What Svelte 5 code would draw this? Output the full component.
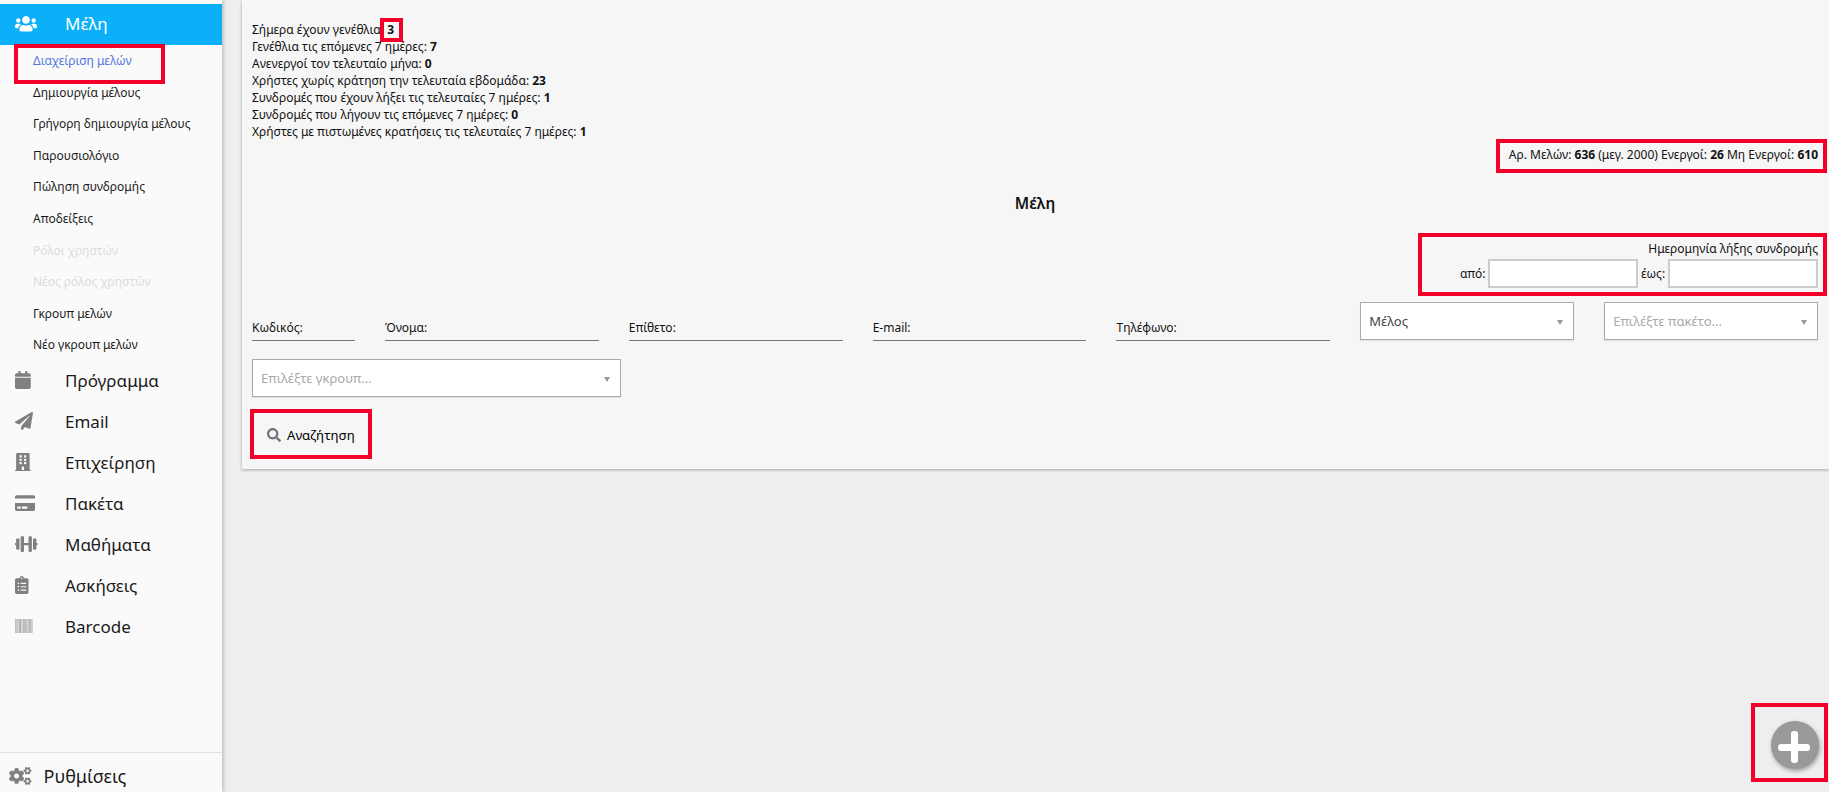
<script>
  const icons = {
    calendar: { vb: '0 0 448 512', w: 15.75, d: 'M12 192h424c6.6 0 12 5.4 12 12v260c0 26.5-21.5 48-48 48H48c-26.5 0-48-21.5-48-48V204c0-6.6 5.4-12 12-12zm436-44v-36c0-26.5-21.5-48-48-48h-48V12c0-6.6-5.4-12-12-12h-40c-6.6 0-12 5.4-12 12v52H160V12c0-6.6-5.4-12-12-12h-40c-6.6 0-12 5.4-12 12v52H48C21.5 64 0 85.5 0 112v36c0 6.6 5.4 12 12 12h424c6.6 0 12-5.4 12-12z' },
    plane: { vb: '0 0 512 512', w: 18, d: 'M476 3.2L12.5 270.6c-18.1 10.4-15.8 35.6 2.2 43.2L121 358.4l287.3-253.2c5.5-4.9 13.3 2.6 8.6 8.3L176 407v80.5c0 23.6 28.5 32.9 42.5 15.8L282 426l124.6 52.2c14.2 6 30.4-2.9 33-18.2l72-432C515 7.8 493.3-6.8 476 3.2z' },
    building: { vb: '0 0 448 512', w: 15.75, d: 'M436 480h-20V24c0-13.255-10.745-24-24-24H56C42.745 0 32 10.745 32 24v456H12c-6.627 0-12 5.373-12 12v20h448v-20c0-6.627-5.373-12-12-12zM128 76c0-6.627 5.373-12 12-12h40c6.627 0 12 5.373 12 12v40c0 6.627-5.373 12-12 12h-40c-6.627 0-12-5.373-12-12V76zm0 96c0-6.627 5.373-12 12-12h40c6.627 0 12 5.373 12 12v40c0 6.627-5.373 12-12 12h-40c-6.627 0-12-5.373-12-12v-40zm52 148h-40c-6.627 0-12-5.373-12-12v-40c0-6.627 5.373-12 12-12h40c6.627 0 12 5.373 12 12v40c0 6.627-5.373 12-12 12zm76 160h-64v-84c0-6.627 5.373-12 12-12h40c6.627 0 12 5.373 12 12v84zm64-172c0 6.627-5.373 12-12 12h-40c-6.627 0-12-5.373-12-12v-40c0-6.627 5.373-12 12-12h40c6.627 0 12 5.373 12 12v40zm0-96c0 6.627-5.373 12-12 12h-40c-6.627 0-12-5.373-12-12v-40c0-6.627 5.373-12 12-12h40c6.627 0 12 5.373 12 12v40zm0-96c0 6.627-5.373 12-12 12h-40c-6.627 0-12-5.373-12-12V76c0-6.627 5.373-12 12-12h40c6.627 0 12 5.373 12 12v40z' },
    card: { vb: '0 0 576 512', w: 20.25, d: 'M0 432c0 26.5 21.5 48 48 48h480c26.5 0 48-21.5 48-48V256H0v176zm192-68c0-6.6 5.4-12 12-12h136c6.6 0 12 5.4 12 12v40c0 6.6-5.4 12-12 12H204c-6.6 0-12-5.4-12-12v-40zm-128 0c0-6.6 5.4-12 12-12h72c6.6 0 12 5.4 12 12v40c0 6.6-5.4 12-12 12H76c-6.6 0-12-5.4-12-12v-40zM576 80v48H0V80c0-26.5 21.5-48 48-48h480c26.5 0 48 21.5 48 48z' },
    dumbbell: { vb: '0 0 640 512', w: 22.5, d: 'M104 96H56c-13.3 0-24 10.7-24 24v104H8c-4.4 0-8 3.6-8 8v48c0 4.4 3.6 8 8 8h24v104c0 13.3 10.7 24 24 24h48c13.3 0 24-10.7 24-24V120c0-13.3-10.7-24-24-24zm528 128h-24V120c0-13.3-10.7-24-24-24h-48c-13.3 0-24 10.7-24 24v272c0 13.3 10.7 24 24 24h48c13.3 0 24-10.7 24-24V288h24c4.4 0 8-3.6 8-8v-48c0-4.4-3.6-8-8-8zM456 32h-48c-13.3 0-24 10.7-24 24v168H256V56c0-13.3-10.7-24-24-24h-48c-13.3 0-24 10.7-24 24v400c0 13.3 10.7 24 24 24h48c13.3 0 24-10.7 24-24V288h128v168c0 13.3 10.7 24 24 24h48c13.3 0 24-10.7 24-24V56c0-13.3-10.7-24-24-24z' },
    clipboard: { vb: '0 0 384 512', w: 13.5, d: 'M336 64h-80c0-35.3-28.7-64-64-64s-64 28.7-64 64H48C21.5 64 0 85.5 0 112v352c0 26.5 21.5 48 48 48h288c26.5 0 48-21.5 48-48V112c0-26.5-21.5-48-48-48zM96 424c-13.3 0-24-10.7-24-24s10.7-24 24-24 24 10.7 24 24-10.7 24-24 24zm0-96c-13.3 0-24-10.7-24-24s10.7-24 24-24 24 10.7 24 24-10.7 24-24 24zm0-96c-13.3 0-24-10.7-24-24s10.7-24 24-24 24 10.7 24 24-10.7 24-24 24zm96-192c13.3 0 24 10.7 24 24s-10.7 24-24 24-24-10.7-24-24 10.7-24 24-24zm128 368c0 4.4-3.6 8-8 8H168c-4.4 0-8-3.6-8-8v-16c0-4.4 3.6-8 8-8h144c4.4 0 8 3.6 8 8v16zm0-96c0 4.4-3.6 8-8 8H168c-4.4 0-8-3.6-8-8v-16c0-4.4 3.6-8 8-8h144c4.4 0 8 3.6 8 8v16zm0-96c0 4.4-3.6 8-8 8H168c-4.4 0-8-3.6-8-8v-16c0-4.4 3.6-8 8-8h144c4.4 0 8 3.6 8 8v16z' }
  };
  const usersPath = 'M96 224c35.3 0 64-28.7 64-64s-28.7-64-64-64-64 28.7-64 64 28.7 64 64 64zm448 0c35.3 0 64-28.7 64-64s-28.7-64-64-64-64 28.7-64 64 28.7 64 64 64zm32 32h-64c-17.6 0-33.5 7.1-45.1 18.6 40.3 22.1 68.9 62 75.1 109.4h66c17.7 0 32-14.3 32-32v-32c0-35.3-28.7-64-64-64zm-256 0c61.9 0 112-50.1 112-112S381.9 32 320 32 208 82.1 208 144s50.1 112 112 112zm76.8 32h-8.3c-20.8 10-43.9 16-68.5 16s-47.6-6-68.5-16h-8.3C179.6 288 128 339.6 128 403.2V432c0 26.5 21.5 48 48 48h288c26.5 0 48-21.5 48-48v-28.8c0-63.6-51.6-115.2-115.2-115.2zm-223.7-13.4C161.5 263.1 145.6 256 128 256H64c-35.3 0-64 28.7-64 64v32c0 17.7 14.3 32 32 32h65.9c6.3-47.4 34.9-87.3 75.2-109.4z';
  const searchPath = 'M505 442.7L405.3 343c-4.5-4.5-10.6-7-17-7H372c27.6-35.3 44-79.7 44-128C416 93.1 322.9 0 208 0S0 93.1 0 208s93.1 208 208 208c48.3 0 92.7-16.4 128-44v16.3c0 6.4 2.5 12.5 7 17l99.7 99.7c9.4 9.4 24.6 9.4 33.9 0l28.3-28.3c9.4-9.4 9.4-24.6.1-34zM208 336c-70.7 0-128-57.2-128-128 0-70.7 57.2-128 128-128 70.7 0 128 57.2 128 128 0 70.7-57.2 128-128 128z';
  const cogsPath = 'M512.1 191l-8.2 14.3c-3 5.3-9.4 7.5-15.1 5.4-11.8-4.4-22.6-10.7-32.1-18.6-4.6-3.8-5.8-10.5-2.8-15.7l8.2-14.3c-6.9-8-12.3-17.3-15.9-27.4h-16.5c-6 0-11.2-4.3-12.2-10.3-2-12-2.1-24.6 0-37.1 1-6 6.2-10.4 12.2-10.4h16.5c3.6-10.1 9-19.4 15.9-27.4l-8.2-14.3c-3-5.2-1.9-11.9 2.8-15.7 9.5-7.9 20.4-14.2 32.1-18.6 5.7-2.1 12.1.1 15.1 5.4l8.2 14.3c10.5-1.9 21.2-1.9 31.7 0L552 6.3c3-5.3 9.4-7.5 15.1-5.4 11.8 4.4 22.6 10.7 32.1 18.6 4.6 3.8 5.8 10.5 2.8 15.7l-8.2 14.3c6.9 8 12.3 17.3 15.9 27.4h16.5c6 0 11.2 4.3 12.2 10.3 2 12 2.1 24.6 0 37.1-1 6-6.2 10.4-12.2 10.4h-16.5c-3.6 10.1-9 19.4-15.9 27.4l8.2 14.3c3 5.2 1.9 11.9-2.8 15.7-9.5 7.9-20.4 14.2-32.1 18.6-5.7 2.1-12.1-.1-15.1-5.4l-8.2-14.3c-10.4 1.9-21.2 1.9-31.7 0zm-10.5-58.8c38.5 29.6 82.4-14.3 52.8-52.8-38.5-29.7-82.4 14.3-52.8 52.8zM386.3 286.1l33.7 16.8c10.1 5.8 14.5 18.1 10.5 29.1-8.9 24.2-26.4 46.4-42.6 65.8-7.4 8.9-20.2 11.1-30.3 5.3l-29.1-16.8c-16 13.7-34.6 24.6-54.9 31.7v33.6c0 11.6-8.3 21.6-19.7 23.6-24.6 4.2-50.4 4.4-75.9 0-11.5-2-20-11.9-20-23.6V418c-20.3-7.2-38.9-18-54.9-31.7L74 403c-10 5.8-22.9 3.6-30.3-5.3-16.2-19.4-33.3-41.6-42.2-65.7-4-10.9.4-23.2 10.5-29.1l33.3-16.8c-3.9-20.9-3.9-42.4 0-63.4L12 205.8c-10.1-5.8-14.6-18.1-10.5-29 8.9-24.2 26-46.4 42.2-65.8 7.4-8.9 20.2-11.1 30.3-5.3l29.1 16.8c16-13.7 34.6-24.6 54.9-31.7V57.1c0-11.5 8.2-21.5 19.6-23.5 24.6-4.2 50.5-4.4 76-.1 11.5 2 20 11.9 20 23.6v33.6c20.3 7.2 38.9 18 54.9 31.7l29.1-16.8c10-5.8 22.9-3.6 30.3 5.3 16.2 19.4 33.2 41.6 42.1 65.8 4 10.9.1 23.2-10 29.1l-33.7 16.8c3.9 21 3.9 42.5 0 63.5zm-117.6 21.1c59.2-77-28.7-164.9-105.7-105.7-59.2 77 28.7 164.9 105.7 105.7zm243.4 182.7l-8.2 14.3c-3 5.3-9.4 7.5-15.1 5.4-11.8-4.4-22.6-10.7-32.1-18.6-4.6-3.8-5.8-10.5-2.8-15.7l8.2-14.3c-6.9-8-12.3-17.3-15.9-27.4h-16.5c-6 0-11.2-4.3-12.2-10.3-2-12-2.1-24.6 0-37.1 1-6 6.2-10.4 12.2-10.4h16.5c3.6-10.1 9-19.4 15.9-27.4l-8.2-14.3c-3-5.2-1.9-11.9 2.8-15.7 9.5-7.9 20.4-14.2 32.1-18.6 5.7-2.1 12.1.1 15.1 5.4l8.2 14.3c10.5-1.9 21.2-1.9 31.7 0l8.2-14.3c3-5.3 9.4-7.5 15.1-5.4 11.8 4.4 22.6 10.7 32.1 18.6 4.6 3.8 5.8 10.5 2.8 15.7l-8.2 14.3c6.9 8 12.3 17.3 15.9 27.4h16.5c6 0 11.2 4.3 12.2 10.3 2 12 2.1 24.6 0 37.1-1 6-6.2 10.4-12.2 10.4h-16.5c-3.6 10.1-9 19.4-15.9 27.4l8.2 14.3c3 5.2 1.9 11.9-2.8 15.7-9.5 7.9-20.4 14.2-32.1 18.6-5.7 2.1-12.1-.1-15.1-5.4l-8.2-14.3c-10.4 1.9-21.2 1.9-31.7 0zM501.6 431c38.5 29.6 82.4-14.3 52.8-52.8-38.5-29.6-82.4 14.3-52.8 52.8z';

  const subs = [
    { t: 'Διαχείριση μελών', c: 'active' },
    { t: 'Δημιουργία μέλους' },
    { t: 'Γρήγορη δημιουργία μέλους' },
    { t: 'Παρουσιολόγιο' },
    { t: 'Πώληση συνδρομής' },
    { t: 'Αποδείξεις' },
    { t: 'Ρόλοι χρηστών', c: 'off' },
    { t: 'Νέος ρόλος χρηστών', c: 'off' },
    { t: 'Γκρουπ μελών' },
    { t: 'Νέο γκρουπ μελών' }
  ];
  const navs = [
    { t: 'Πρόγραμμα', i: 'calendar' },
    { t: 'Email', i: 'plane' },
    { t: 'Επιχείρηση', i: 'building' },
    { t: 'Πακέτα', i: 'card' },
    { t: 'Μαθήματα', i: 'dumbbell' },
    { t: 'Ασκήσεις', i: 'clipboard' }
  ];
  const stats = [
    ['Σήμερα έχουν γενέθλια:', '3'],
    ['Γενέθλια τις επόμενες 7 ημέρες:', '7'],
    ['Ανενεργοί τον τελευταίο μήνα:', '0'],
    ['Χρήστες χωρίς κράτηση την τελευταία εβδομάδα:', '23'],
    ['Συνδρομές που έχουν λήξει τις τελευταίες 7 ημέρες:', '1'],
    ['Συνδρομές που λήγουν τις επόμενες 7 ημέρες:', '0'],
    ['Χρήστες με πιστωμένες κρατήσεις τις τελευταίες 7 ημέρες:', '1']
  ];
  const fields = ['Κωδικός:', 'Όνομα:', 'Επίθετο:', 'E-mail:', 'Τηλέφωνο:'];
  const bars = [0.3, 1.6, 2.7, 4.2, 5.1, 6.6, 7.9, 8.8, 10.3, 11.4, 12.7, 14.1, 15.2, 16.6];
</script>

<div class="page">
  <aside class="side">
    <div class="menu">
      <div class="nav current">
        <span class="ico">
          <svg width="22" height="17.6" viewBox="0 0 640 512"><path fill="currentColor" d={usersPath} /></svg>
        </span>
        Μέλη
      </div>
      <ul class="subs">
        {#each subs as s}
          <li class={s.c ?? ''}>{s.t}</li>
        {/each}
      </ul>
      {#each navs as n}
        <div class="nav">
          <span class="ico">
            <svg width={icons[n.i].w} height="18" viewBox={icons[n.i].vb}><path fill="currentColor" d={icons[n.i].d} /></svg>
          </span>
          {n.t}
        </div>
      {/each}
      <div class="nav">
        <span class="ico">
          <svg width="18" height="14" viewBox="0 0 18 14">
            {#each bars as b, i}
              <rect x={b} y="0" width="0.75" height="14" fill={i % 3 === 1 ? '#8f8f8f' : '#a6a6a6'} />
            {/each}
          </svg>
        </span>
        Barcode
      </div>
    </div>
    <div class="settings">
      <svg width="22.5" height="18" viewBox="0 0 640 512"><path fill="#808080" d={cogsPath} /></svg>
      Ρυθμίσεις
    </div>
  </aside>

  <main class="main">
    <section class="card">
      <div class="stats">
        {#each stats as s}
          <div>{s[0]} <b>{s[1]}</b></div>
        {/each}
      </div>
      <div class="totals">Αρ. Μελών: <b>636</b> (μεγ. 2000) Ενεργοί: <b>26</b> Μη Ενεργοί: <b>610</b></div>
      <h2 class="title">Μέλη</h2>
      <div class="dates">
        <div>Ημερομηνία λήξης συνδρομής</div>
        <div class="date-row">
          <label for="from">από:</label><input id="from" type="text" />
          <label for="to">έως:</label><input id="to" type="text" />
        </div>
      </div>
      <div class="filters">
        {#each fields as f}
          <div class="field">{f}</div>
        {/each}
        <div class="select filled">Μέλος<i></i></div>
        <div class="select">Επιλέξτε πακέτο...<i></i></div>
        <div class="select group">Επιλέξτε γκρουπ...<i></i></div>
      </div>
      <button class="search" type="button">
        <svg width="14" height="14" viewBox="0 0 512 512"><path fill="#757575" d={searchPath} /></svg>
        Αναζήτηση
      </button>
    </section>
  </main>

  <button class="fab" type="button" aria-label="Προσθήκη"><span></span></button>

  <div class="mark m1"></div>
  <div class="mark m2"></div>
  <div class="mark m3"></div>
  <div class="mark m4"></div>
  <div class="mark m5"></div>
  <div class="mark m6"></div>
</div>

<style>
  :global(body) {
    margin: 0;
    background: #eeeeee;
  }
  .page {
    position: relative;
    display: flex;
    width: 1829px;
    height: 792px;
    overflow: hidden;
    background: #eeeeee;
    color: #111;
    font-family: "Noto Sans", "Open Sans", sans-serif;
  }
  .side {
    width: 222px;
    flex: none;
    display: flex;
    flex-direction: column;
    justify-content: space-between;
    background: #fafafa;
    box-shadow: 1px 0 4px rgba(0, 0, 0, 0.25);
    padding-top: 4px;
    box-sizing: border-box;
    height: 792px;
  }
  .nav {
    display: flex;
    align-items: center;
    box-sizing: border-box;
    height: 41px;
    padding: 0 0 2px 15px;
    font-size: 17px;
    color: #1a1a1a;
  }
  .nav.current {
    background: #0bb0f9;
    color: #fff;
  }
  .ico {
    width: 50px;
    flex: none;
    display: flex;
    align-items: center;
    color: #808080;
  }
  .current .ico {
    color: #fff;
  }
  .subs {
    list-style: none;
    margin: 0;
    padding: 0;
  }
  .subs li {
    height: 31.6px;
    line-height: 31.6px;
    padding-left: 33px;
    font-size: 12px;
    color: #1a1a1a;
  }
  .subs li.active {
    color: #5577dd;
  }
  .subs li.off {
    color: #dcdcdc;
  }
  .settings {
    display: flex;
    align-items: center;
    gap: 12px;
    height: 46px;
    flex: none;
    margin-bottom: -7px;
    padding-left: 9px;
    border-top: 1px solid #e2e2e2;
    font-size: 18px;
    color: #1a1a1a;
  }
  .main {
    flex: 1;
    margin-left: 20px;
  }
  .card {
    box-sizing: border-box;
    height: 469px;
    padding: 21px 11px 0 10px;
    background: #f6f6f6;
    box-shadow: 0 1px 3px rgba(0, 0, 0, 0.3);
    font-size: 12px;
    line-height: 17px;
  }
  .totals {
    margin-top: 6px;
    text-align: right;
  }
  .title {
    margin: 30px 0 0;
    text-align: center;
    font-size: 15.5px;
    line-height: 20px;
    font-weight: 600;
  }
  .dates {
    margin-top: 27px;
    text-align: right;
  }
  .date-row {
    display: flex;
    justify-content: flex-end;
    align-items: center;
    gap: 3px;
    margin-top: 2px;
  }
  .date-row label {
    width: 24px;
    white-space: nowrap;
  }
  .date-row label:first-child {
    margin-right: 1px;
  }
  .date-row input {
    box-sizing: border-box;
    width: 150px;
    height: 29px;
    border: 2px solid #cccccc;
    background: #fff;
    padding: 0 4px;
    margin: 0;
    border-radius: 0;
    outline: none;
  }
  .filters {
    display: grid;
    grid-template-columns: 103px repeat(6, minmax(0, 1fr));
    column-gap: 30px;
    row-gap: 19px;
    margin-top: 14px;
  }
  .field {
    align-self: end;
    height: 24px;
    line-height: 24px;
    margin-bottom: -1px;
    border-bottom: 1px solid #777;
  }
  .select {
    position: relative;
    box-sizing: border-box;
    height: 38px;
    line-height: 36px;
    padding: 0 8px;
    background: #fff;
    border: 1px solid #aaaaaa;
    box-shadow: 0 1px 1px rgba(0, 0, 0, 0.08);
    color: #aaa;
    font-size: 13px;
  }
  .select.filled {
    color: #444;
  }
  .select.group {
    grid-column: 1 / span 3;
    width: 369px;
  }
  .select i {
    position: absolute;
    right: 10px;
    top: 17px;
    width: 0;
    height: 0;
    border-left: 3.5px solid transparent;
    border-right: 3.5px solid transparent;
    border-top: 5px solid #999;
  }
  .search {
    display: flex;
    align-items: center;
    gap: 6px;
    margin: 28px 0 0 15px;
    padding: 0;
    border: 0;
    background: none;
    font: inherit;
    font-size: 13.2px;
    font-weight: 400;
    line-height: 20px;
    color: #000;
  }
  .fab {
    position: absolute;
    left: 1771px;
    top: 721px;
    width: 48px;
    height: 48px;
    padding: 0;
    border: 0;
    border-radius: 50%;
    background: #999999;
    box-shadow: 1px 2px 4px rgba(0, 0, 0, 0.35);
  }
  .fab span {
    position: absolute;
    left: 7px;
    top: 22.5px;
    width: 32px;
    height: 7px;
    border-radius: 3px;
    background: #fff;
  }
  .fab span::after {
    content: "";
    position: absolute;
    left: 13px;
    top: -12.5px;
    width: 7px;
    height: 32px;
    border-radius: 3px;
    background: #fff;
  }
  .mark {
    position: absolute;
    box-sizing: border-box;
    border: 4px solid #f3002a;
    pointer-events: none;
  }
  .m1 { left: 14px; top: 44px; width: 151px; height: 40px; }
  .m2 { left: 380px; top: 18px; width: 23px; height: 24px; }
  .m3 { left: 1496px; top: 139px; width: 331px; height: 34px; }
  .m4 { left: 1418px; top: 233px; width: 409px; height: 63px; }
  .m5 { left: 250px; top: 409px; width: 122px; height: 50px; }
  .m6 { left: 1751px; top: 703px; width: 77px; height: 79px; }
</style>
